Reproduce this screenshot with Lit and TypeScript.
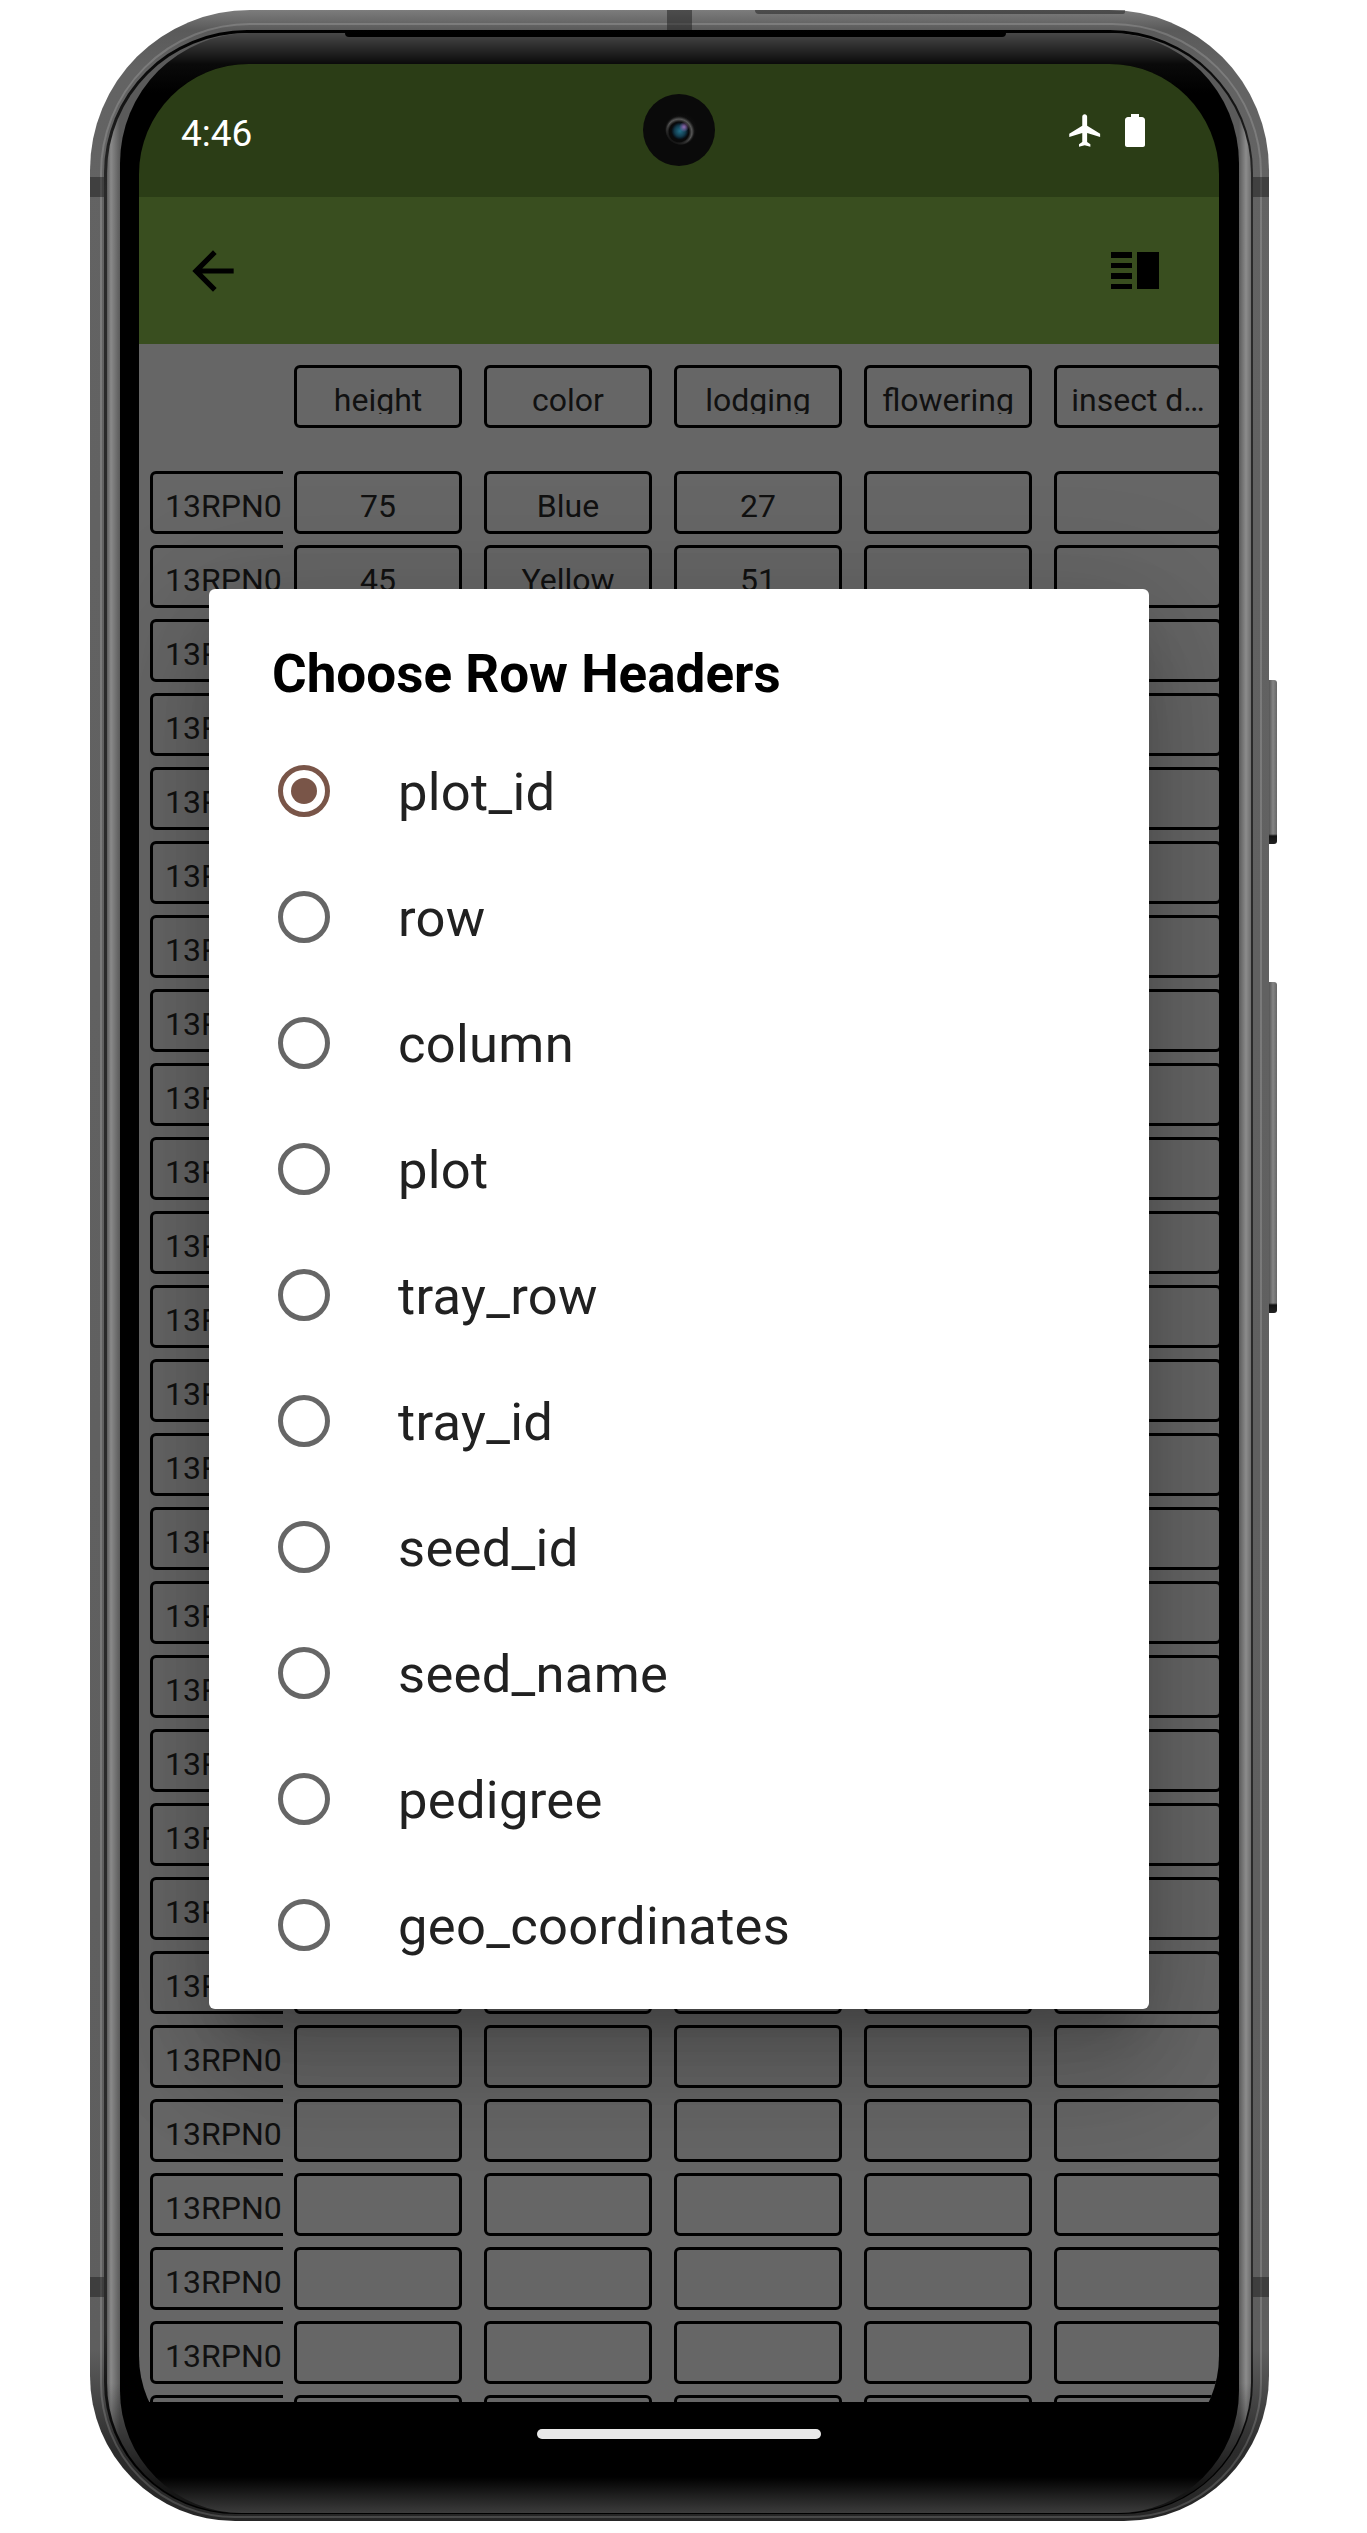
import { LitElement, css, html } from 'lit'
import { customElement } from 'lit/decorators.js'

const COLUMNS = ['height', 'color', 'lodging', 'flowering', 'insect d…']

const HEADERS = [
  'plot_id',
  'row',
  'column',
  'plot',
  'tray_row',
  'tray_id',
  'seed_id',
  'seed_name',
  'pedigree',
  'geo_coordinates',
]

const VALUES: string[][] = [
  ['75', 'Blue', '27', '', ''],
  ['45', 'Yellow', '51', '', ''],
]

const ROW_COUNT = 27

@customElement('app-root')
export class AppRoot extends LitElement {
  static styles = css`
    :host {
      display: block;
      width: 1367px;
      height: 2533px;
      box-sizing: border-box;
      padding: 10px 98px 12px 90px;
      background: #fff;
      overflow: hidden;
      font-family: Roboto, 'Liberation Sans', sans-serif;
    }

    /* phone body, nested rings from the outside in */
    .frame {
      position: relative;
      height: 100%;
      box-sizing: border-box;
      padding: 20px 16px 7px 14px;
      border-radius: 160px 160px 145px 145px;
      background: linear-gradient(180deg, #7c7c7c 0, #5a5a5a 20px, #636363 60px, #5e5e5e 2340px, #2c2c2c 2440px, #262626 100%);
    }

    .frame::before {
      content: '';
      position: absolute;
      inset: 13px 7px 3px 10px;
      border: 2px solid rgba(255, 255, 255, 0.16);
      border-radius: 150px 150px 135px 135px;
    }

    .rim {
      position: relative;
      height: 100%;
      box-sizing: border-box;
      padding: 3px 2px 1px 3px;
      border-radius: 143px 143px 132px 132px;
      background: linear-gradient(180deg, #000 0, #111 60px, #2a2a2a 160px, #2a2a2a 2300px, #000 2420px);
    }

    .band {
      height: 100%;
      box-sizing: border-box;
      padding: 0 12px 0 13px;
      border-radius: 140px 140px 130px 130px;
      background:
        linear-gradient(180deg, rgba(0, 0, 0, 0) 2350px, rgba(10, 10, 10, 0.85) 2450px),
        linear-gradient(90deg, #5e5e5e 0, #8a8a8a 4px, #5a5a5a 13px, #5a5a5a calc(100% - 12px), #8c8c8c calc(100% - 5px), #6e6e6e 100%);
    }

    .bezel {
      height: 100%;
      box-sizing: border-box;
      padding: 31px 20px 45px 19px;
      border-radius: 130px 130px 122px 122px;
      background: linear-gradient(180deg, #484848 0, #0a0a0a 31px, #000 60px, #000 calc(100% - 36px), #3c3c3c 100%);
    }

    .slit {
      position: absolute;
      background: rgba(30, 30, 30, 0.5);
    }

    .slit.top { top: 0; left: 577px; width: 25px; height: 20px; }
    .slit.left-a { top: 167px; left: 0; width: 14px; height: 20px; }
    .slit.right-a { top: 167px; right: 0; width: 16px; height: 20px; }
    .slit.left-b { top: 2267px; left: 0; width: 14px; height: 20px; }
    .slit.right-b { top: 2267px; right: 0; width: 16px; height: 20px; }
    .slit.edge { top: 0; left: 665px; width: 370px; height: 4px; border-radius: 0 0 4px 8px; }

    .top-strip {
      position: absolute;
      top: 23px;
      left: 255px;
      width: 661px;
      height: 4px;
      border-radius: 0 0 4px 4px;
      background: #000;
    }

    .side-btn {
      position: absolute;
      left: 100%;
      width: 8px;
      border-radius: 0 3px 3px 0;
      background:
        linear-gradient(180deg, rgba(0, 0, 0, 0) calc(100% - 10px), #111 calc(100% - 8px), #222 100%),
        linear-gradient(90deg, #555 0, #858585 50%, #666 100%);
    }

    .side-btn.power { top: 670px; height: 164px; }
    .side-btn.volume { top: 972px; height: 331px; }

    .screen {
      position: relative;
      height: 2402px;
      display: flex;
      flex-direction: column;
      border-radius: 110px;
      overflow: hidden;
      background: #000;
    }

    .status {
      flex: none;
      height: 133px;
      display: flex;
      align-items: center;
      justify-content: space-between;
      padding: 0 74px 0 42px;
      background: #2b3d16;
      color: #fff;
    }

    .time {
      margin-top: 5px;
      font-size: 37px;
    }

    .status-icons {
      display: flex;
      align-items: center;
      gap: 20px;
    }

    .status-icons svg {
      display: block;
      fill: #fff;
    }

    .camera {
      position: absolute;
      top: 30px;
      left: 50%;
      width: 72px;
      height: 72px;
      margin-left: -36px;
      border-radius: 50%;
      background:
        radial-gradient(circle 5px at 41px 33px, rgba(170, 115, 195, 0.85), rgba(170, 115, 195, 0)),
        radial-gradient(circle 9px at 37px 37px, #23708a 0, #123c4e 60%, #070d14 92%, rgba(0, 0, 0, 0) 100%),
        radial-gradient(circle 16px at 38px 35px, rgba(0, 0, 0, 0) 80%, #0a0a0a 100%),
        radial-gradient(circle 16px at 36px 38px, #0a0a0a 62%, #565656 80%, #1c1c1c 94%, rgba(0, 0, 0, 0) 100%),
        radial-gradient(circle 36px at 36px 36px, #0b0b0b 0, #0f0f0f 68%, #030303 72%, #000 100%);
    }

    .appbar {
      flex: none;
      height: 147px;
      display: flex;
      align-items: center;
      justify-content: space-between;
      padding: 0 60px 0 43px;
      background: #394e1f;
    }

    .appbar svg {
      display: block;
    }

    .sheet {
      flex: none;
      height: 2058px;
      box-sizing: border-box;
      padding: 21px 0 0 11px;
      display: flex;
      flex-direction: column;
      gap: 11px;
      overflow: hidden;
      background: #666;
    }

    .row {
      flex: none;
      display: flex;
      gap: 22px;
    }

    .row.head {
      margin-bottom: 32px;
    }

    .row-label {
      flex: none;
      width: 133px;
      margin-right: -11px;
      overflow: hidden;
    }

    .cell {
      flex: none;
      width: 168px;
      height: 63px;
      box-sizing: border-box;
      border: 3px solid #000;
      border-radius: 6px;
    }

    .text {
      height: 46px;
      box-sizing: border-box;
      padding-top: 14px;
      overflow: hidden;
      font-size: 32px;
      line-height: 37px;
      text-align: center;
      white-space: nowrap;
      color: #111;
    }

    .row-label .text {
      padding-left: 12px;
      text-align: left;
    }

    .nav {
      flex: none;
      height: 64px;
      display: flex;
      align-items: center;
      justify-content: center;
    }

    .home {
      width: 284px;
      height: 10px;
      border-radius: 5px;
      background: #e8e8e8;
    }

    .dialog {
      position: absolute;
      top: 525px;
      left: 70px;
      width: 940px;
      box-sizing: border-box;
      padding-bottom: 21px;
      border-radius: 6px;
      background: #fff;
      box-shadow:
        0 63px 100px 8px rgba(0, 0, 0, 0.14),
        0 24px 120px 21px rgba(0, 0, 0, 0.12),
        0 29px 40px -18px rgba(0, 0, 0, 0.2);
    }

    .dialog h2 {
      margin: 0;
      height: 139px;
      box-sizing: border-box;
      padding: 54px 0 0 63px;
      font-size: 53px;
      font-weight: 700;
      line-height: 62px;
      color: #000;
    }

    .option {
      height: 126px;
      display: flex;
      align-items: center;
      gap: 68px;
      padding-left: 69px;
      font-size: 52.5px;
      letter-spacing: 0.3px;
      color: #212121;
    }

    .option span:last-child {
      padding-top: 2px;
    }

    .radio {
      flex: none;
      width: 52px;
      height: 52px;
      box-sizing: border-box;
      display: flex;
      align-items: center;
      justify-content: center;
      border: 5px solid #666;
      border-radius: 50%;
    }

    .radio.on {
      border-color: #795548;
    }

    .radio.on::after {
      content: '';
      width: 26px;
      height: 26px;
      border-radius: 50%;
      background: #795548;
    }
  `

  private renderRow(values: string[], label: string) {
    return html`
      <div class="row">
        <div class="row-label"><div class="cell"><div class="text">${label}</div></div></div>
        ${values.map(v => html`<div class="cell"><div class="text">${v}</div></div>`)}
      </div>
    `
  }

  render() {
    const empty = COLUMNS.map(() => '')
    const rows = Array.from({ length: ROW_COUNT }, (_, i) => VALUES[i] ?? empty)

    return html`
      <div class="frame">
        <div class="rim">
          <div class="band">
            <div class="bezel">
              <div class="screen">
                <div class="status">
                  <span class="time">4:46</span>
                  <div class="status-icons">
                    <svg width="39" height="39" viewBox="0 0 24 24"><path d="M21 16v-2l-8-5V3.5c0-.83-.67-1.5-1.5-1.5S10 2.67 10 3.5V9l-8 5v2l8-2.5V19l-2 1.5V22l3.5-1 3.5 1v-1.5L13 19v-5.5l8 2.5z"/></svg>
                    <svg width="20" height="33" viewBox="0 0 20 33"><path d="M6 0h8v3h3c1.6 0 3 1.4 3 3v25c0 1-1 2-2 2H2c-1 0-2-1-2-2V6c0-1.6 1.4-3 3-3h3z"/></svg>
                  </div>
                </div>
                <div class="camera"></div>
                <div class="appbar">
                  <svg width="62" height="62" viewBox="0 0 24 24"><path d="M20 11H7.83l5.59-5.59L12 4l-8 8 8 8 1.41-1.41L7.83 13H20v-2z"/></svg>
                  <svg width="48" height="37" viewBox="0 0 48 37">
                    <path d="M0 0h21v6H0zM0 11h21v5H0zM0 21h21v6H0zM0 32h21v5H0zM26 0h22v37H26z"/>
                  </svg>
                </div>
                <div class="sheet">
                  <div class="row head">
                    <div class="row-label"></div>
                    ${COLUMNS.map(c => html`<div class="cell"><div class="text">${c}</div></div>`)}
                  </div>
                  ${rows.map(r => this.renderRow(r, '13RPN0'))}
                </div>
                <div class="nav"><div class="home"></div></div>
                <div class="dialog">
                  <h2>Choose Row Headers</h2>
                  ${HEADERS.map((h, i) => html`
                    <div class="option">
                      <span class="radio ${i === 0 ? 'on' : ''}"></span>
                      <span>${h}</span>
                    </div>
                  `)}
                </div>
              </div>
            </div>
          </div>
        </div>
        <div class="top-strip"></div>
        <div class="slit top"></div>
        <div class="slit edge"></div>
        <div class="slit left-a"></div>
        <div class="slit right-a"></div>
        <div class="slit left-b"></div>
        <div class="slit right-b"></div>
        <div class="side-btn power"></div>
        <div class="side-btn volume"></div>
      </div>
    `
  }
}
